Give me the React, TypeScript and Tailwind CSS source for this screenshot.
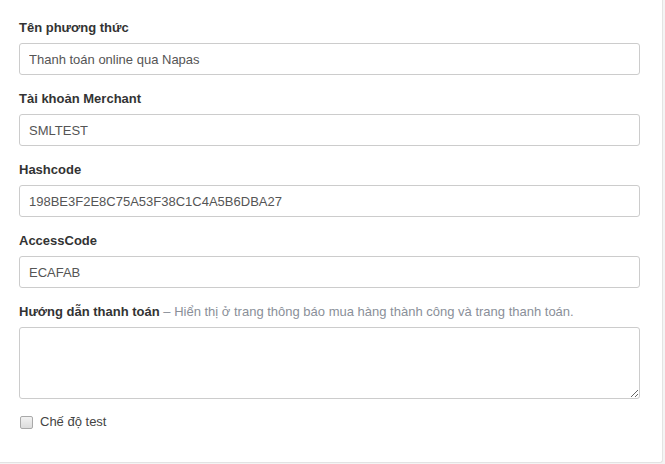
const fields = [
  { label: 'Tên phương thức', value: 'Thanh toán online qua Napas' },
  { label: 'Tài khoản Merchant', value: 'SMLTEST' },
  { label: 'Hashcode', value: '198BE3F2E8C75A53F38C1C4A5B6DBA27' },
  { label: 'AccessCode', value: 'ECAFAB' },
];

export default function App() {
  return (
    <div className="w-[665px] h-[464px] bg-[#f4f4f4] font-['Liberation_Sans',Arial,sans-serif] text-[13px] text-[#333]">
      <div className="w-[663px] h-[463px] bg-white border-r border-b border-[#e3e3e3] rounded-br-[3px] pl-[19px] pr-[22px] pt-[19px]">
        {fields.map((f) => (
          <div key={f.label} className="mb-[15px]">
            <label className="block font-bold leading-[18px] mb-[6px]">{f.label}</label>
            <input
              readOnly
              value={f.value}
              className="block w-full h-[32px] px-[9px] border border-[#cccccc] rounded-[3px] text-[#555] outline-none"
            />
          </div>
        ))}
        <div className="mb-[14px]">
          <label className="block leading-[18px] mb-[6px]">
            <span className="font-bold">Hướng dẫn thanh toán</span>
            <span className="text-[#8a8f99]"> – Hiển thị ở trang thông báo mua hàng thành công và trang thanh toán.</span>
          </label>
          <textarea className="block w-full h-[72px] px-[9px] py-[6px] border border-[#cccccc] rounded-[3px] outline-none" />
        </div>
        <label className="flex items-center gap-[7px] text-[#444] leading-[18px]">
          <input
            type="checkbox"
            className="appearance-none w-[13px] h-[13px] ml-[1px] bg-gradient-to-b from-[#f2f2f2] to-[#dcdcdc] border border-[#a9a9a9] rounded-[2px]"
          />
          <span>Chế độ test</span>
        </label>
      </div>
    </div>
  );
}
